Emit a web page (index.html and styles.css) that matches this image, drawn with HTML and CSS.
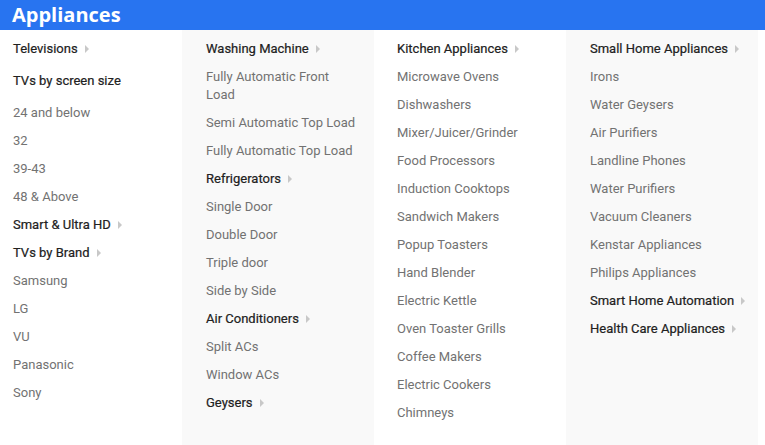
FILE: index.html
```html
<!DOCTYPE html>
<html>
<head>
<meta charset="utf-8">
<link rel="stylesheet" href="styles.css">
</head>
<body>
<div class="header">Appliances</div>
<div class="menu">
  <div class="col">
    <a class="item title">Televisions<span class="arrow"></span></a>
    <a class="item title spaced">TVs by screen size</a>
    <a class="item">24 and below</a>
    <a class="item">32</a>
    <a class="item">39-43</a>
    <a class="item">48 &amp; Above</a>
    <a class="item title">Smart &amp; Ultra HD<span class="arrow"></span></a>
    <a class="item title">TVs by Brand<span class="arrow"></span></a>
    <a class="item">Samsung</a>
    <a class="item">LG</a>
    <a class="item">VU</a>
    <a class="item">Panasonic</a>
    <a class="item">Sony</a>
  </div>
  <div class="col alt">
    <a class="item title">Washing Machine<span class="arrow"></span></a>
    <a class="item">Fully Automatic Front Load</a>
    <a class="item">Semi Automatic Top Load</a>
    <a class="item">Fully Automatic Top Load</a>
    <a class="item title">Refrigerators<span class="arrow"></span></a>
    <a class="item">Single Door</a>
    <a class="item">Double Door</a>
    <a class="item">Triple door</a>
    <a class="item">Side by Side</a>
    <a class="item title">Air Conditioners<span class="arrow"></span></a>
    <a class="item">Split ACs</a>
    <a class="item">Window ACs</a>
    <a class="item title">Geysers<span class="arrow"></span></a>
  </div>
  <div class="col">
    <a class="item title">Kitchen Appliances<span class="arrow"></span></a>
    <a class="item">Microwave Ovens</a>
    <a class="item">Dishwashers</a>
    <a class="item">Mixer/Juicer/Grinder</a>
    <a class="item">Food Processors</a>
    <a class="item">Induction Cooktops</a>
    <a class="item">Sandwich Makers</a>
    <a class="item">Popup Toasters</a>
    <a class="item">Hand Blender</a>
    <a class="item">Electric Kettle</a>
    <a class="item">Oven Toaster Grills</a>
    <a class="item">Coffee Makers</a>
    <a class="item">Electric Cookers</a>
    <a class="item">Chimneys</a>
  </div>
  <div class="col alt">
    <a class="item title">Small Home Appliances<span class="arrow"></span></a>
    <a class="item">Irons</a>
    <a class="item">Water Geysers</a>
    <a class="item">Air Purifiers</a>
    <a class="item">Landline Phones</a>
    <a class="item">Water Purifiers</a>
    <a class="item">Vacuum Cleaners</a>
    <a class="item">Kenstar Appliances</a>
    <a class="item">Philips Appliances</a>
    <a class="item title">Smart Home Automation<span class="arrow"></span></a>
    <a class="item title">Health Care Appliances<span class="arrow"></span></a>
  </div>
</div>
</body>
</html>
```
FILE: styles.css
```css
html, body {
  margin: 0;
  padding: 0;
  background: #fff;
  overflow: hidden;
}
.header {
  height: 30px;
  background: #2874f0;
  color: #fff;
  font-family: "Open Sans", sans-serif;
  font-weight: 700;
  font-size: 20px;
  line-height: 30px;
  padding-left: 12px;
  box-sizing: border-box;
}
.menu {
  display: flex;
  margin-left: -10px;
  height: 415px;
}
.col {
  width: 192px;
  flex: none;
  box-sizing: border-box;
  padding: 5px 18px 0 23px;
  display: flex;
  flex-direction: column;
  background: #fff;
}
.col.alt {
  background: #f9f9f9;
  padding-left: 24px;
  padding-right: 17px;
}
.item {
  display: block;
  font-family: Roboto, sans-serif;
  font-size: 13px;
  line-height: 18px;
  padding: 5px 0;
  color: #727272;
}
.item.title {
  color: #212121;
  white-space: nowrap;
  -webkit-text-stroke: 0.2px #212121;
}
.item.spaced {
  margin: 4px 0;
}
.arrow {
  display: inline-block;
  width: 0;
  height: 0;
  border-top: 4px solid transparent;
  border-bottom: 4px solid transparent;
  border-left: 4px solid #c8c8c8;
  margin-left: 7px;
  vertical-align: 0px;
}
```
